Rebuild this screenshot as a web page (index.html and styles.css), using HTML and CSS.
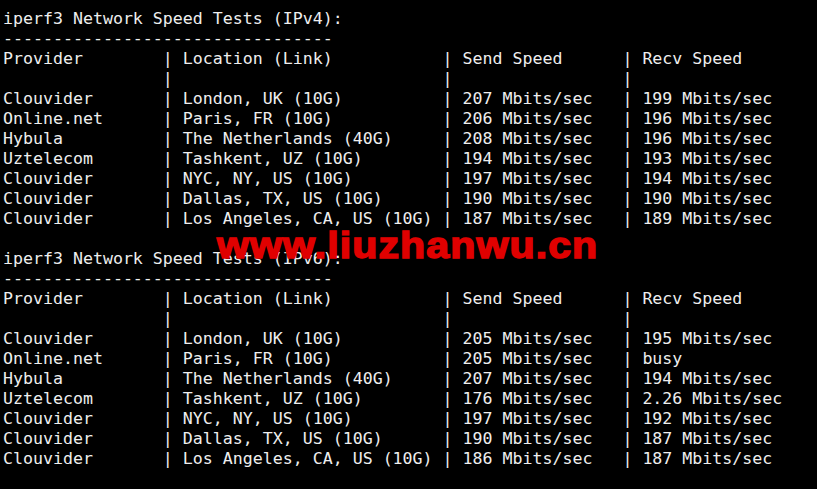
FILE: index.html
```html
<!DOCTYPE html>
<html>
<head>
<meta charset="utf-8">
<link rel="stylesheet" href="styles.css">
</head>
<body>
<div class="term">
<pre class="out">iperf3 Network Speed Tests (IPv4):
---------------------------------
Provider        | Location (Link)           | Send Speed      | Recv Speed
                |                           |                 |
Clouvider       | London, UK (10G)          | 207 Mbits/sec   | 199 Mbits/sec
Online.net      | Paris, FR (10G)           | 206 Mbits/sec   | 196 Mbits/sec
Hybula          | The Netherlands (40G)     | 208 Mbits/sec   | 196 Mbits/sec
Uztelecom       | Tashkent, UZ (10G)        | 194 Mbits/sec   | 193 Mbits/sec
Clouvider       | NYC, NY, US (10G)         | 197 Mbits/sec   | 194 Mbits/sec
Clouvider       | Dallas, TX, US (10G)      | 190 Mbits/sec   | 190 Mbits/sec
Clouvider       | Los Angeles, CA, US (10G) | 187 Mbits/sec   | 189 Mbits/sec

iperf3 Network Speed Tests (IPv6):
---------------------------------
Provider        | Location (Link)           | Send Speed      | Recv Speed
                |                           |                 |
Clouvider       | London, UK (10G)          | 205 Mbits/sec   | 195 Mbits/sec
Online.net      | Paris, FR (10G)           | 205 Mbits/sec   | busy
Hybula          | The Netherlands (40G)     | 207 Mbits/sec   | 194 Mbits/sec
Uztelecom       | Tashkent, UZ (10G)        | 176 Mbits/sec   | 2.26 Mbits/sec
Clouvider       | NYC, NY, US (10G)         | 197 Mbits/sec   | 192 Mbits/sec
Clouvider       | Dallas, TX, US (10G)      | 190 Mbits/sec   | 187 Mbits/sec
Clouvider       | Los Angeles, CA, US (10G) | 186 Mbits/sec   | 187 Mbits/sec</pre>
<div class="watermark">www.liuzhanwu.cn</div>
</div>
</body>
</html>
```
FILE: styles.css
```css
html, body {
  margin: 0;
  padding: 0;
  background: #000;
}
.term {
  position: relative;
  width: 817px;
  height: 489px;
  background: #000;
  overflow: hidden;
}
.out {
  margin: 0;
  padding: 9px 0 0 3px;
  font-family: "DejaVu Sans Mono", monospace;
  font-size: 16.6px;
  line-height: 20px;
  color: #eeeeee;
  white-space: pre;
}
.watermark {
  position: absolute;
  left: 217px;
  top: 227px;
  font-family: "Liberation Sans", Arial, sans-serif;
  font-weight: bold;
  font-size: 37px;
  line-height: 37px;
  color: #e00000;
  -webkit-text-stroke: 1.5px #e00000;
  letter-spacing: 1px;
  transform: scaleX(1.11);
  transform-origin: 0 0;
  white-space: nowrap;
}
```
